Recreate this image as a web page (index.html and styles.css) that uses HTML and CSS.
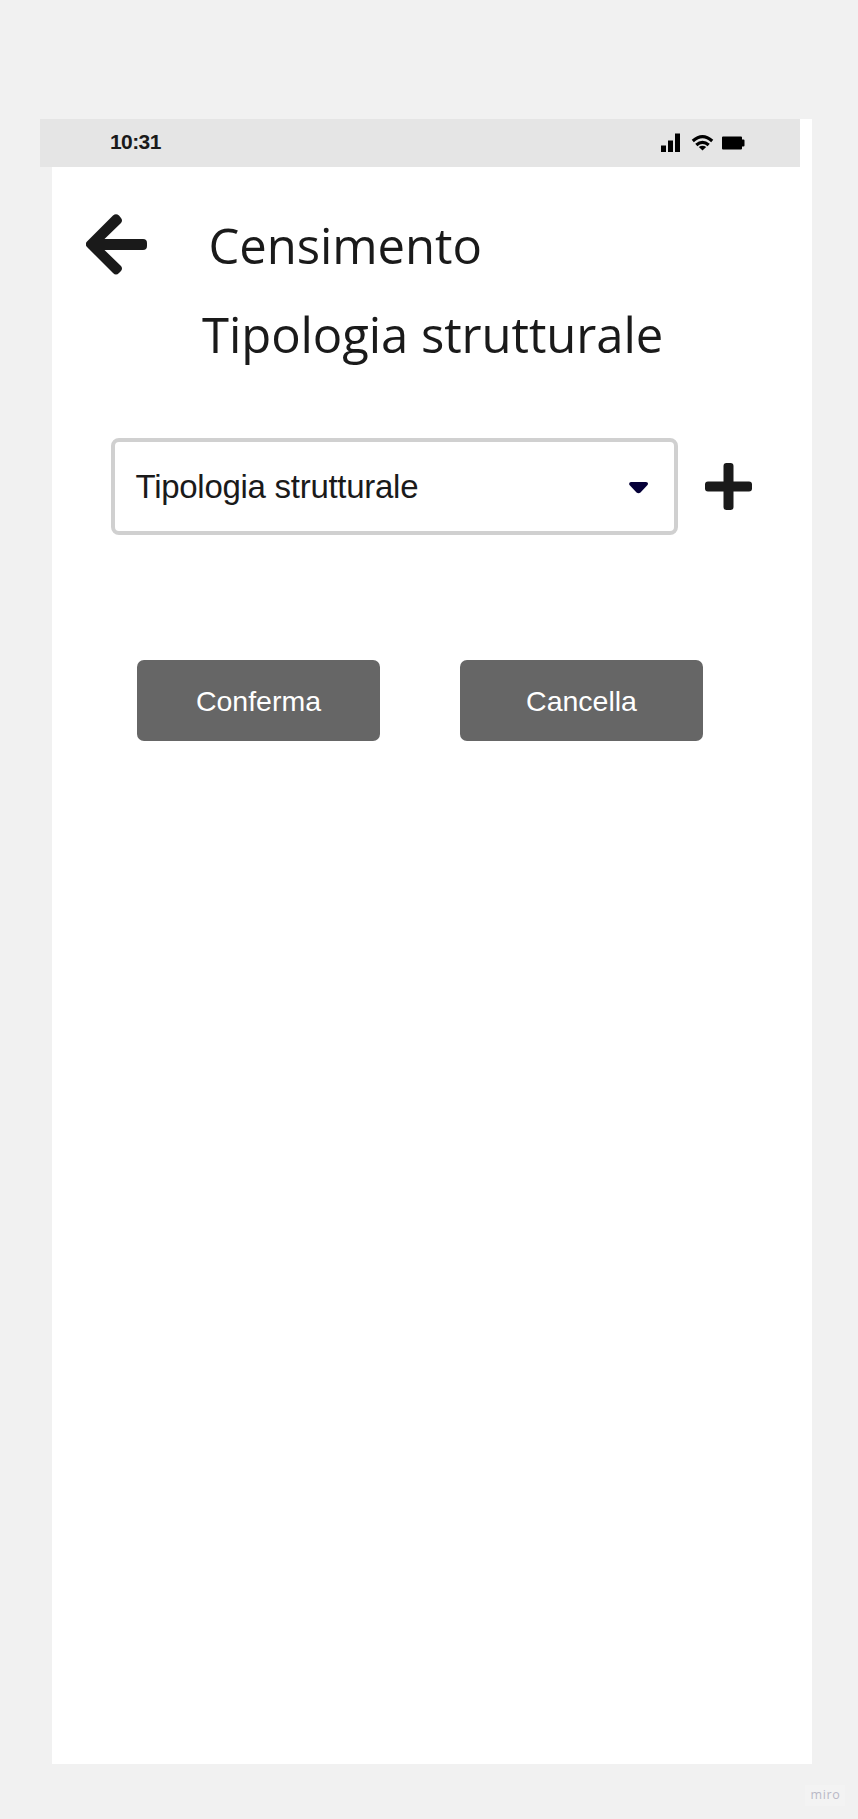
FILE: index.html
```html
<!DOCTYPE html>
<html lang="it">
<head>
<meta charset="utf-8">
<title>Censimento</title>
<link rel="stylesheet" href="styles.css">
</head>
<body>
<main class="phone">
  <div class="status">
    <span class="time">10:31</span>
    <svg class="status-icons" width="84" height="20" viewBox="0 0 84 20">
      <path d="M0 12.500h5v6.500h-5zM7 7.500h5v11.500h-5zM14 .5h5v18.500h-5z"/>
      <g fill="none" stroke="#000" stroke-width="3.200">
        <path d="M31.800 8Q41.500 -.6 51.200 8"/>
        <path d="M35.300 12Q41.500 6.600 47.700 12"/>
      </g>
      <path d="M37.800 14Q41.500 11.600 45.200 14L41.500 17.500z"/>
      <path d="M62 3.500h18q1 0 1 1v2h1.500q1 0 1 1v5q0 1-1 1H81v2q0 1-1 1H62q-1 0-1-1V4.500q0-1 1-1z"/>
    </svg>
  </div>
  <header class="header">
    <svg class="back" width="62" height="62" viewBox="0 0 62 62">
      <path d="M1 27.500L27 1.500Q30 -1 33 1.500L35 4Q37 6.500 35 9L18.500 25H57Q61 25 61 29V32Q61 36 57 36H18.500L35 52Q37 54.500 35 57L33 59Q30 62 27 59L1 33Q-1.500 30.250 1 27.500z"/>
    </svg>
    <h1 class="title">Censimento</h1>
  </header>
  <h2 class="subtitle">Tipologia strutturale</h2>
  <div class="field">
    <div class="select">
      <span class="value">Tipologia strutturale</span>
      <svg class="caret" width="20" height="12" viewBox="0 0 20 12"><path fill="#050038" d="M2 0H17Q20 .5 18.500 3L11.500 10.500Q9.500 12 7.500 10.500L.5 3Q-.7 .5 2 0z"/></svg>
    </div>
    <svg class="plus" width="47" height="47" viewBox="0 0 47 47"><path d="M21.500 0h4q3 0 3 3v15.500H44q3 0 3 3v4q0 3-3 3H28.500V44q0 3-3 3h-4q-3 0-3-3V28.500H3q-3 0-3-3v-4q0-3 3-3h15.500V3q0-3 3-3z"/></svg>
  </div>
  <div class="actions">
    <button class="button confirm">Conferma</button>
    <button class="button cancel">Cancella</button>
  </div>
</main>
<footer class="brand"><span class="mark">miro</span></footer>
</body>
</html>
```
FILE: styles.css
```css
* { box-sizing: border-box; }
body {
  margin: 0;
  height: 1819px;
  padding: 118.500px 0 0 52px;
  background: #f1f1f1;
  color: #1a1a1a;
  font-family: "Liberation Sans", Arial, sans-serif;
}
svg { display: block; flex: none; }
.phone {
  width: 760px;
  height: 1645px;
  background: #fff;
}
.status {
  display: flex;
  align-items: flex-start;
  justify-content: space-between;
  width: 760px;
  height: 48.500px;
  margin-left: -12px;
  padding: 14px 55px 0 70px;
  background: #e5e5e5;
}
.time {
  font-size: 21px;
  font-weight: 700;
  line-height: 17px;
  letter-spacing: -.6px;
}
.status-icons { fill: #000; }
.header {
  display: flex;
  height: 60px;
  margin-top: 47px;
  padding-left: 34px;
}
.back, .plus { fill: #1a1a1a; }
.title, .subtitle {
  margin: 0;
  font: 400 49px/62px "Open Sans", sans-serif;
  letter-spacing: -.07px;
  white-space: nowrap;
}
.title { margin-left: 60.500px; }
.subtitle {
  height: 60px;
  margin: 30px 0 0 150px;
  line-height: 60px;
}
.field {
  display: flex;
  align-items: center;
  gap: 27px;
  margin: 74px 0 0 59px;
}
.select {
  display: flex;
  align-items: center;
  justify-content: space-between;
  width: 567px;
  height: 97px;
  padding: 0 25.500px 0 20.500px;
  border: 4px solid #d0d0d0;
  border-radius: 8px;
  font-size: 33px;
}
.value {
  white-space: nowrap;
  line-height: 40px;
  letter-spacing: -.28px;
}
.caret { margin-top: 3px; }
.actions {
  display: flex;
  gap: 80px;
  margin: 125px 0 0 85px;
}
.button {
  width: 243px;
  height: 81px;
  padding: 0;
  border: 0;
  border-radius: 7px;
  background: #666;
  color: #fff;
  font: 400 28.500px/82px "Liberation Sans", Arial, sans-serif;
  letter-spacing: 0;
}
.brand {
  display: flex;
  justify-content: flex-end;
  padding: 21px 13px 0 0;
}
.mark {
  width: 40px;
  height: 21px;
  padding-left: 1px;
  background: #f3f3f3;
  color: #b9b8c6;
  font: 500 12.500px/20px "Open Sans", sans-serif;
  letter-spacing: .6px;
  text-align: center;
}
```
